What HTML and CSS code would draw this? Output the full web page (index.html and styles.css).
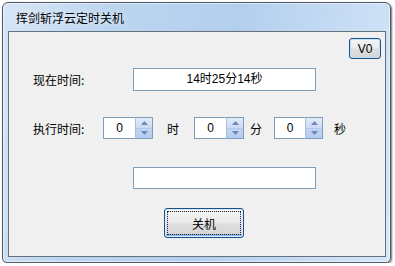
FILE: index.html
```html
<!DOCTYPE html>
<html>
<head>
<meta charset="utf-8">
<link rel="stylesheet" href="styles.css">
</head>
<body>
<div class="window">
  <div class="title">挥剑斩浮云定时关机</div>
  <div class="client">
    <div class="row-top"><button class="btn btn-v0">V0</button></div>
    <div class="row row-now">
      <span class="label label-now">现在时间:</span>
      <div class="textbox">14时25分14秒</div>
    </div>
    <div class="row row-exec">
      <span class="label label-exec">执行时间:</span>
      <div class="spin">
        <div class="spin-field">0</div>
        <div class="spin-btns">
          <div class="spin-up"><svg width="7" height="4" viewBox="0 0 7 4"><polygon points="0,4 3.5,0 7,4" fill="#6f88b4"/></svg></div>
          <div class="spin-down"><svg width="7" height="4" viewBox="0 0 7 4"><polygon points="0,0 3.5,4 7,0" fill="#6f88b4"/></svg></div>
        </div>
      </div>
      <span class="unit unit-h">时</span>
      <div class="spin">
        <div class="spin-field">0</div>
        <div class="spin-btns">
          <div class="spin-up"><svg width="7" height="4" viewBox="0 0 7 4"><polygon points="0,4 3.5,0 7,4" fill="#6f88b4"/></svg></div>
          <div class="spin-down"><svg width="7" height="4" viewBox="0 0 7 4"><polygon points="0,0 3.5,4 7,0" fill="#6f88b4"/></svg></div>
        </div>
      </div>
      <span class="unit unit-m">分</span>
      <div class="spin spin-last">
        <div class="spin-field">0</div>
        <div class="spin-btns">
          <div class="spin-up"><svg width="7" height="4" viewBox="0 0 7 4"><polygon points="0,4 3.5,0 7,4" fill="#6f88b4"/></svg></div>
          <div class="spin-down"><svg width="7" height="4" viewBox="0 0 7 4"><polygon points="0,0 3.5,4 7,0" fill="#6f88b4"/></svg></div>
        </div>
      </div>
      <span class="unit unit-s">秒</span>
    </div>
    <div class="row row-empty">
      <div class="textbox textbox-empty"></div>
    </div>
    <div class="row row-btn">
      <button class="btn btn-main"><span class="focus">关机</span></button>
    </div>
  </div>
</div>
</body>
</html>
```
FILE: styles.css
```css
html, body {
  margin: 0;
  padding: 0;
  background: #ffffff;
  font-family: "Noto Sans CJK SC", "Liberation Sans", sans-serif;
  font-size: 12px;
  color: #000;
}

.window {
  box-sizing: border-box;
  margin: 2px 0 0 2px;
  width: 389px;
  height: 261px;
  border: 1px solid #4f5863;
  border-radius: 6px 6px 5px 5px;
  background: linear-gradient(100deg, #d6e6f7 0%, #bcd5f0 25%, #b3cfee 55%, #c6dcf4 80%, #d5e7f9 100%);
  box-shadow: 1px 1px 2px rgba(0, 0, 0, 0.55), inset 0 0 0 1px rgba(255, 255, 255, 0.55);
  padding: 0 4px 5px 5px;
  display: flex;
  flex-direction: column;
}

.title {
  height: 28px;
  line-height: 28px;
  padding-left: 8px;
  padding-top: 1px;
  box-sizing: border-box;
  font-size: 12px;
  color: #000;
  text-shadow: 0 0 6px rgba(255, 255, 255, 0.9);
}

.client {
  flex: 1;
  box-sizing: border-box;
  border: 1px solid #66717e;
  background: #f0f0f0;
  display: flex;
  flex-direction: column;
}

.row-top {
  display: flex;
  justify-content: flex-end;
  padding-right: 4px;
  margin-top: 6px;
}

.btn {
  box-sizing: border-box;
  font-family: "Liberation Sans", "Noto Sans CJK SC", sans-serif;
  font-size: 12px;
  color: #000;
  padding: 0;
  border: 1px solid #1f4f88;
  border-radius: 3px;
  background: linear-gradient(#f5f5f5 0%, #ececec 45%, #dedede 55%, #d4d4d4 100%);
  box-shadow: inset 0 0 0 1px #fbfbfb;
}

.btn-v0 {
  width: 32px;
  height: 21px;
  box-shadow: inset 0 0 0 1px #bfe1f7;
}

.row {
  display: flex;
  align-items: center;
}

.label {
  box-sizing: border-box;
  padding-left: 24px;
}

.label-now {
  width: 124px;
}

.label-exec {
  width: 94px;
}

.row-now {
  margin-top: 9px;
}

.textbox {
  box-sizing: border-box;
  width: 183px;
  height: 23px;
  border: 1px solid #7f9db9;
  background: #fff;
  text-align: center;
  line-height: 21px;
  font-family: "Liberation Sans", "Noto Sans CJK SC", sans-serif;
  font-size: 12px;
}

.row-exec {
  margin-top: 26px;
}

.spin {
  display: flex;
  width: 50px;
  height: 22px;
}

.spin-last {
  width: 49px;
}

.spin-field {
  box-sizing: border-box;
  flex: 1;
  border: 1px solid #7f9db9;
  border-right: none;
  background: #fff;
  text-align: center;
  line-height: 20px;
  font-family: "Liberation Sans", sans-serif;
  font-size: 12px;
}

.spin-btns {
  box-sizing: border-box;
  width: 18px;
  display: flex;
  flex-direction: column;
  border: 1px solid #7f9db9;
  border-left: 1px solid #a9bedf;
}

.spin-up, .spin-down {
  flex: 1;
  display: flex;
  align-items: center;
  justify-content: center;
}

.spin-up {
  background: linear-gradient(#e3ebf9, #c9d9f5);
  border-bottom: 1px solid #b4c8ea;
}

.spin-down {
  background: linear-gradient(#c3d5f4, #b5cbf1);
}

.unit {
  box-sizing: border-box;
}

.unit-h {
  width: 41px;
  padding-left: 14px;
}

.unit-m {
  width: 30px;
  padding-left: 6px;
}

.unit-s {
  padding-left: 11px;
}

.row-empty {
  margin-top: 28px;
  padding-left: 124px;
}

.textbox-empty {
  height: 22px;
}

.row-btn {
  margin-top: 19px;
  padding-left: 155px;
}

.btn-main {
  width: 80px;
  height: 30px;
  padding: 2px;
  font-family: "Noto Sans CJK SC", sans-serif;
  box-shadow: inset 0 0 0 1px #d8ecfb, inset 0 -2px 0 1px #8fb8e8;
}

.focus {
  display: flex;
  align-items: center;
  justify-content: center;
  box-sizing: border-box;
  width: 100%;
  height: 100%;
  border: 1px dotted #222;
  font-size: 12px;
}
```
